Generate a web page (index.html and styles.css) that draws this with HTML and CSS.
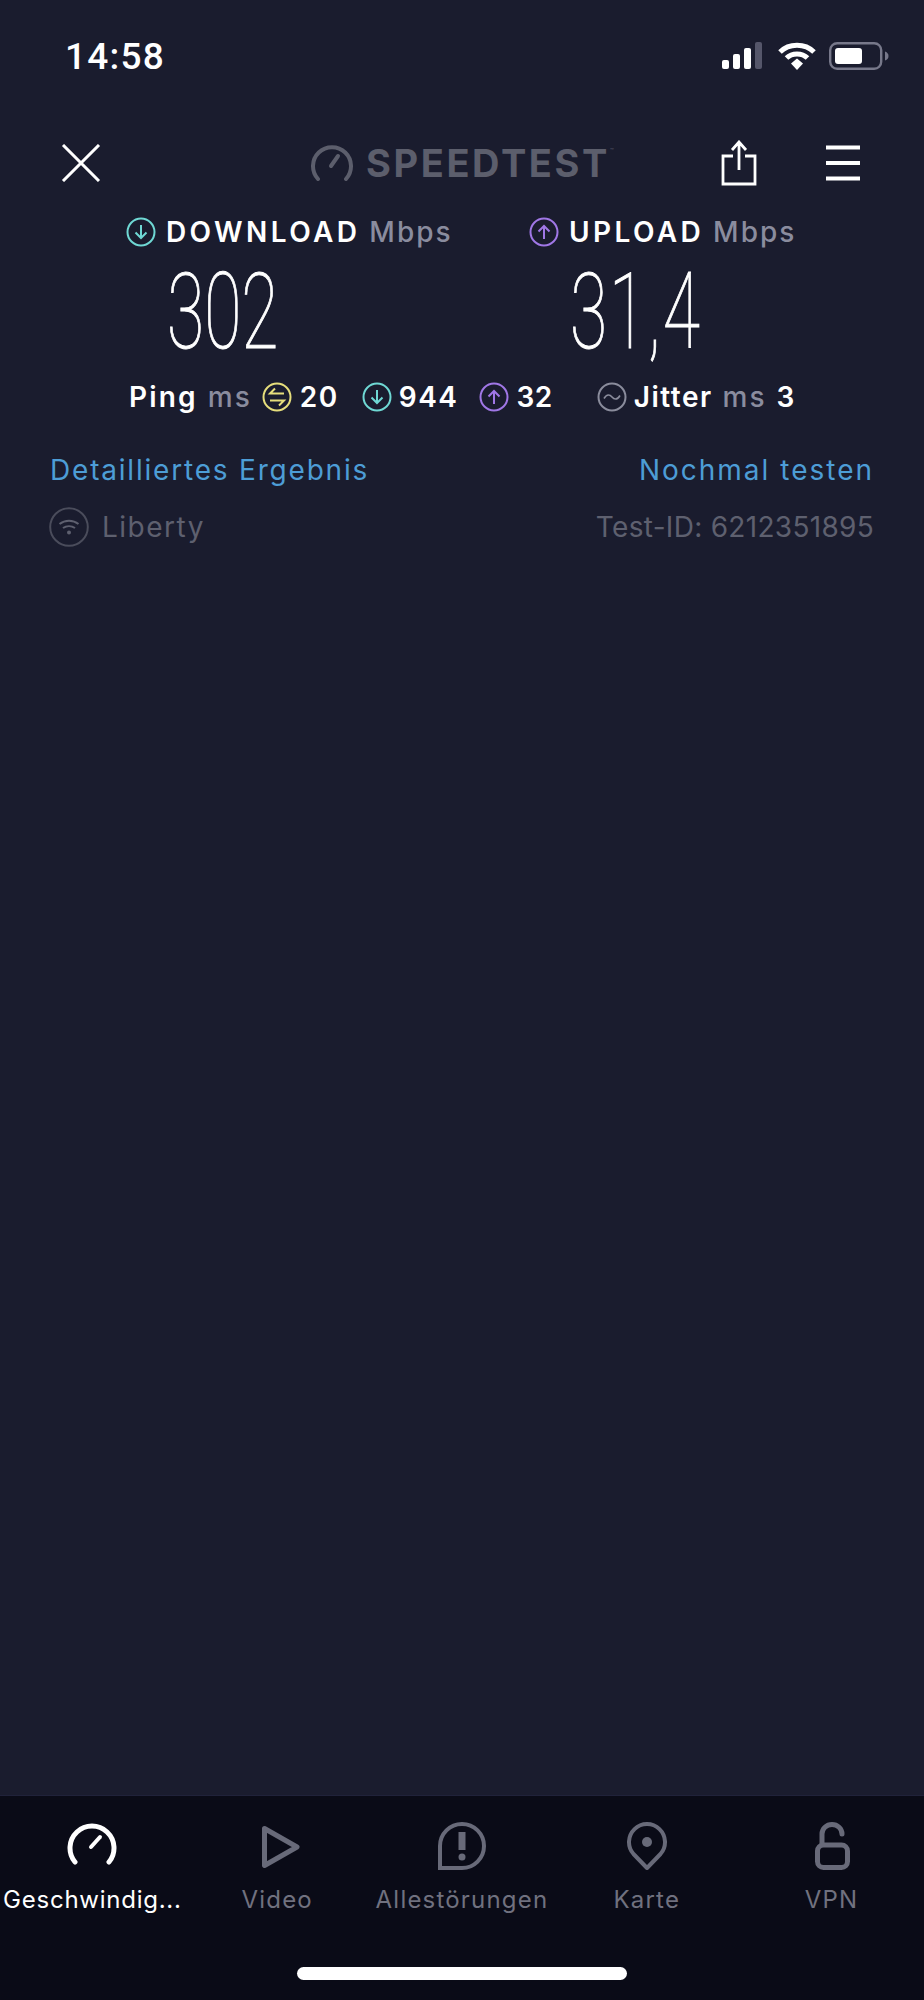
FILE: index.html
```html
<!DOCTYPE html>
<html lang="de">
<head>
<meta charset="utf-8">
<title>Speedtest</title>
<link rel="stylesheet" href="styles.css">
</head>
<body>
<div class="screen">
  <div class="status">
    <span class="clock">14:58</span>
    <div class="status-icons">
      <svg width="44" height="28" viewBox="0 0 44 28"><rect x="1" y="18" width="7" height="9" rx="2" fill="#fff"/><rect x="12" y="12" width="7" height="15" rx="2" fill="#fff"/><rect x="23" y="6" width="7" height="21" rx="2" fill="#fff"/><rect x="34" y="0" width="7" height="27" rx="2" fill="#55566a"/></svg>
      <svg width="38" height="28" viewBox="0 0 38 28"><path d="M2 10C11 1 27 1 36 10" fill="none" stroke="#fff" stroke-width="5"/><path d="M8.500 16C14 10.500 24 10.500 29.500 16" fill="none" stroke="#fff" stroke-width="5"/><path d="M13 21.500L19 16.500L25 21.500L19 28Z" fill="#fff"/></svg>
      <svg width="60" height="28" viewBox="0 0 60 28"><rect x="1.200" y="1.200" width="51" height="25.600" rx="7" fill="none" stroke="#77788a" stroke-width="2.400"/><rect x="6" y="6" width="27" height="16" rx="3" fill="#fff"/><path d="M56 9.500C58.500 10.500 59.500 12 59.500 14S58.500 17.500 56 18.500Z" fill="#77788a"/></svg>
    </div>
  </div>

  <header class="topbar">
    <svg class="close" width="40" height="38" viewBox="0 0 40 38"><path d="M2 1L38 37M38 1L2 37" stroke="#fff" stroke-width="3" fill="none"/></svg>
    <div class="logo">
      <svg class="logo-mark" width="42" height="36" viewBox="0 0 42 36"><path d="M7 34A19 19 0 1 1 35 34" fill="none" stroke="#5c5e6c" stroke-width="4" stroke-linecap="round"/><path d="M20 21L27 11" stroke="#5c5e6c" stroke-width="4" stroke-linecap="round"/></svg>
      <span class="logo-text">SPEEDTEST<sup class="logo-tm">™</sup></span>
    </div>
    <svg class="share" width="36" height="46" viewBox="0 0 36 46"><path d="M18 30V2M11 10L18 2L25 10M12 16H2V44H34V16H24" fill="none" stroke="#fff" stroke-width="2.800"/></svg>
    <svg class="menu" width="36" height="36" viewBox="0 0 36 36"><path d="M1 2.500H35M1 18H35M1 33.500H35" stroke="#fff" stroke-width="4"/></svg>
  </header>

  <section class="metrics">
    <div class="metric">
      <div class="metric-head">
        <svg class="ic30" viewBox="0 0 30 30"><circle cx="15" cy="15" r="13.500" fill="none" stroke="#6fd8d4" stroke-width="2"/><path d="M15 8V21M9.500 15.500L15 21L20.500 15.500" fill="none" stroke="#6fd8d4" stroke-width="2"/></svg>
        <span class="metric-name">DOWNLOAD</span><span class="unit">Mbps</span>
      </div>
      <div class="big down-big"><span class="big-num">302</span></div>
    </div>
    <div class="metric">
      <div class="metric-head">
        <svg class="ic30" viewBox="0 0 30 30"><circle cx="15" cy="15" r="13.500" fill="none" stroke="#a077e6" stroke-width="2"/><path d="M15 22V9M9.500 14.500L15 9L20.500 14.500" fill="none" stroke="#a077e6" stroke-width="2"/></svg>
        <span class="metric-name">UPLOAD</span><span class="unit">Mbps</span>
      </div>
      <div class="big up-big"><span class="big-num">31,4</span></div>
    </div>
  </section>

  <section class="stats">
    <span class="stat-strong val-ping">Ping</span><span class="stat-unit">ms</span>
    <svg class="ic30 ping-ic" viewBox="0 0 30 30"><circle cx="15" cy="15" r="13.500" fill="none" stroke="#e6de7c" stroke-width="2"/><path d="M22 11.500H8L13 6.500M8 18.500H22L17 23.500" fill="none" stroke="#e6de7c" stroke-width="2"/></svg>
    <span class="stat-strong val-20">20</span>
    <svg class="ic30 dl-ic" viewBox="0 0 30 30"><circle cx="15" cy="15" r="13.500" fill="none" stroke="#6fd8d4" stroke-width="2"/><path d="M15 8V21M9.500 15.500L15 21L20.500 15.500" fill="none" stroke="#6fd8d4" stroke-width="2"/></svg>
    <span class="stat-strong val-944">944</span>
    <svg class="ic30 ul-ic" viewBox="0 0 30 30"><circle cx="15" cy="15" r="13.500" fill="none" stroke="#a077e6" stroke-width="2"/><path d="M15 22V9M9.500 14.500L15 9L20.500 14.500" fill="none" stroke="#a077e6" stroke-width="2"/></svg>
    <span class="stat-strong val-32">32</span>
    <svg class="ic30 jit-ic" viewBox="0 0 30 30"><circle cx="15" cy="15" r="13.500" fill="none" stroke="#8a8c9c" stroke-width="2"/><path d="M7 16.500C10 11.500 13 12.500 15 15S20 18.500 23 13.500" fill="none" stroke="#8a8c9c" stroke-width="1.600"/></svg>
    <span class="stat-strong val-jit">Jitter</span><span class="stat-unit">ms</span><span class="stat-strong val-3">3</span>
  </section>

  <div class="links">
    <span class="link">Detailliertes Ergebnis</span>
    <span class="link link-again">Nochmal testen</span>
  </div>

  <div class="meta">
    <div class="isp">
      <svg width="40" height="40" viewBox="0 0 40 40"><circle cx="20" cy="20" r="18.800" fill="none" stroke="#4a4c5b" stroke-width="2"/><path d="M10.500 17C16 12.500 24 12.500 29.500 17M14 21C17.500 18.500 22.500 18.500 26 21" fill="none" stroke="#5e606f" stroke-width="2"/><circle cx="20" cy="25.500" r="2" fill="#5e606f"/></svg>
      <span class="isp-name">Liberty</span>
    </div>
    <span class="test-id">Test-ID: 6212351895</span>
  </div>

  <div class="spacer"></div>

  <nav class="tabs">
    <div class="tab active">
      <svg width="50" height="48" viewBox="0 0 50 48"><path d="M8 40A22 22 0 1 1 42 40" fill="none" stroke="#fff" stroke-width="5" stroke-linecap="round"/><path d="M24 25L33 15" stroke="#fff" stroke-width="4" stroke-linecap="round"/></svg>
      <span>Geschwindig...</span>
    </div>
    <div class="tab">
      <svg width="50" height="48" viewBox="0 0 50 48"><path d="M12.500 6.500L45 25L12.500 43.500Z" fill="none" stroke="#686a79" stroke-width="5" stroke-linejoin="round"/></svg>
      <span>Video</span>
    </div>
    <div class="tab">
      <svg width="50" height="48" viewBox="0 0 50 48"><path d="M25 2A22 22 0 0 1 25 46H3V24A22 22 0 0 1 25 2Z" fill="none" stroke="#686a79" stroke-width="4"/><path d="M25 10V28" stroke="#686a79" stroke-width="7"/><circle cx="25" cy="35" r="3.500" fill="#686a79"/></svg>
      <span>Allestörungen</span>
    </div>
    <div class="tab">
      <svg width="50" height="48" viewBox="0 0 50 48"><path d="M25 46L11.500 32A18 18 0 1 1 38.500 32Z" fill="none" stroke="#686a79" stroke-width="4" stroke-linejoin="round"/><circle cx="25" cy="20" r="5" fill="#686a79"/></svg>
      <span>Karte</span>
    </div>
    <div class="tab">
      <svg width="50" height="48" viewBox="0 0 50 48"><path d="M15 22V12A10 9.500 0 0 1 35 12" fill="none" stroke="#686a79" stroke-width="5" stroke-linecap="round"/><rect x="10.500" y="23" width="30" height="22.500" rx="6" fill="none" stroke="#686a79" stroke-width="5"/></svg>
      <span>VPN</span>
    </div>
    <div class="home-indicator"></div>
  </nav>
</div>
</body>
</html>
```

FILE: styles.css
```css
* { box-sizing: border-box; }
html, body { margin: 0; padding: 0; }
body { background: #1a1c2e; font-family: Inter, "Open Sans", sans-serif; color: #fff; }

.screen { width: 924px; height: 2000px; display: flex; flex-direction: column; overflow: hidden; }

.status { height: 112px; padding: 0 35px 0 65px; display: flex; justify-content: space-between; align-items: center; }
.clock { font-family: Roboto, sans-serif; font-size: 37px; font-weight: 500; letter-spacing: 1.2px; line-height: 1; }
.status-icons { display: flex; align-items: center; gap: 13px; }

.topbar { margin-top: 29px; height: 44px; padding: 0 64px 0 61px; display: flex; align-items: center; }
.close { flex: none; }
.logo { margin-left: 210px; display: flex; align-items: center; gap: 13px; width: 296px; flex: none; white-space: nowrap; }
.logo-mark { flex: none; }
.logo-text { font-size: 38px; font-weight: 700; color: #5c5e6c; line-height: 1; letter-spacing: 2.6px; }
.logo-tm { font-size: 6px; font-weight: 400; letter-spacing: 0; vertical-align: 24px; line-height: 0; }
.share { margin-left: 114px; flex: none; }
.menu { margin-left: 68px; flex: none; }

.metrics { margin-top: 32px; padding-left: 126px; display: flex; }
.metric { width: 403px; flex: none; }
.metric-head { display: flex; align-items: center; height: 30px; }
.ic30 { width: 30px; height: 30px; flex: none; }
.metric-name { margin-left: 10px; font-size: 28px; font-weight: 600; line-height: 30px; letter-spacing: 3.4px; }
.unit { margin-left: 9px; font-size: 28px; font-weight: 500; color: #8a8c9e; line-height: 30px; letter-spacing: 2px; }

.big { height: 90px; margin-top: 20px; }
.down-big { padding-left: 41px; }
.up-big { padding-left: 41px; }
.big-num { display: inline-block; font-family: Roboto, sans-serif; font-weight: 100; font-size: 106px; line-height: 90px; -webkit-text-stroke: 1px #fff; transform: scaleX(0.64); transform-origin: left center; }
.up-big .big-num { letter-spacing: 3px; }

.stats { margin-top: 25px; padding-left: 129px; height: 30px; display: flex; align-items: center; }
.stat-strong { font-size: 28px; font-weight: 600; line-height: 30px; letter-spacing: 1.5px; }
.stat-unit { margin-left: 10px; font-size: 28px; font-weight: 500; color: #8a8c9e; line-height: 30px; letter-spacing: 2px; }
.val-ping { letter-spacing: 2.2px; }
.ping-ic { margin-left: 10px; }
.val-20 { margin-left: 8px; }
.dl-ic { margin-left: 23px; }
.val-944 { margin-left: 7px; }
.ul-ic { margin-left: 21px; }
.val-32 { margin-left: 7px; letter-spacing: 0.5px; }
.jit-ic { margin-left: 44px; }
.val-jit { margin-left: 7px; }
.val-3 { margin-left: 10px; }

.links { margin-top: 40px; padding: 0 50px; display: flex; justify-content: space-between; font-size: 28px; line-height: 36px; letter-spacing: 1.8px; }
.link { color: #4d9dd6; }
.link-again { letter-spacing: 2px; }

.meta { margin-top: 19px; padding: 0 50px 0 49px; display: flex; justify-content: space-between; align-items: center; height: 40px; font-size: 28px; color: #5e606f; }
.isp { display: flex; align-items: center; gap: 13px; }
.isp-name { letter-spacing: 1.5px; }
.test-id { letter-spacing: 0.3px; }

.spacer { flex: 1; }

.tabs { position: relative; height: 205px; flex: none; padding-top: 26px; background: #0a0b17; border-top: 1px solid #20223a; display: grid; grid-template-columns: repeat(5, 1fr); align-content: start; }
.tab { display: flex; flex-direction: column; align-items: center; font-size: 24px; color: #70717f; line-height: 28px; white-space: nowrap; letter-spacing: 1.2px; }
.tab svg { margin-bottom: 16px; }
.tab.active { color: #fff; letter-spacing: 0.75px; }
.home-indicator { position: absolute; left: 297px; top: 171px; width: 330px; height: 13px; border-radius: 7px; background: #fff; }
```
